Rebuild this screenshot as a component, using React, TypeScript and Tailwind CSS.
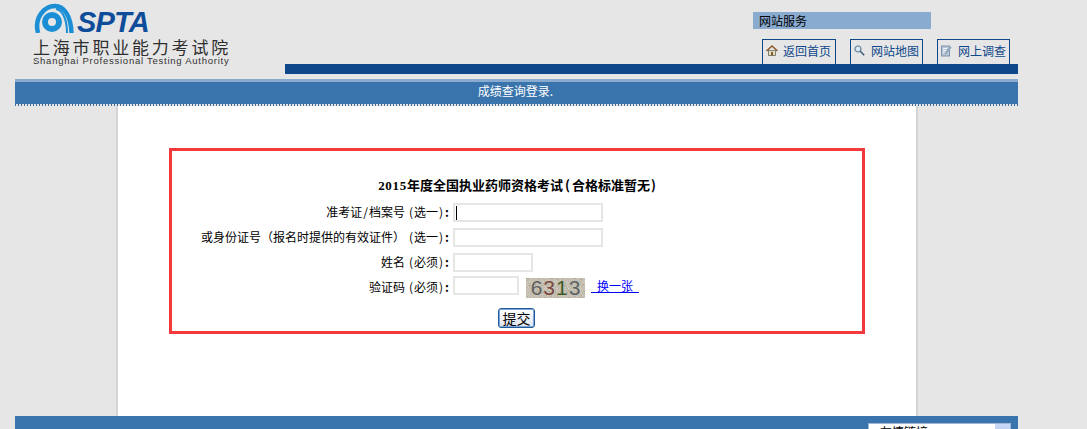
import React from 'react';

const cjk = "font-['Noto_Sans_CJK_SC',sans-serif]";

const HomeIcon = () => (
  <svg width="12" height="11" viewBox="0 0 12 11">
    <path d="M0.5 6 L6 1 L11.5 6" fill="none" stroke="#8a5a2a" strokeWidth="1.5" />
    <rect x="2.5" y="5.5" width="7" height="5" fill="#e8dcc0" stroke="#6b6b5a" strokeWidth="0.8" />
    <rect x="5" y="7" width="2" height="3.5" fill="#7a5a30" />
  </svg>
);

const SearchIcon = () => (
  <svg width="11" height="11" viewBox="0 0 11 11">
    <circle cx="4" cy="4" r="3" fill="#dbe6f0" stroke="#5f7f9f" strokeWidth="1.2" />
    <path d="M6.3 6.3 L10.2 10.2" stroke="#3f5f7f" strokeWidth="1.6" />
  </svg>
);

const EditIcon = () => (
  <svg width="11" height="12" viewBox="0 0 11 12">
    <rect x="0.5" y="1" width="8" height="10" fill="#b9c6d6" stroke="#7d93ad" />
    <path d="M2 3.5 H6 M2 5.5 H5 M2 7.5 H4" stroke="#f2f5f8" />
    <path d="M4 9 L10 2" stroke="#8fa4bc" strokeWidth="1.8" />
  </svg>
);

const Logo = () => (
  <div className="pl-[18px] w-[270px] shrink-0">
    <div className="flex h-[33px] items-end">
      <svg width="40" height="33" viewBox="0 0 40 33" className="ml-[1px] shrink-0">
        <g fill="none" stroke="#1b8fd6">
          <path d="M4 33 C0 18 10 6 21 6 C30 6 37 16 37.5 33" strokeWidth="4.5" />
          <path d="M22 9 C29 10 33 20 33 33" strokeWidth="2" />
          <circle cx="18" cy="22" r="7" strokeWidth="6" />
        </g>
      </svg>
      <span className="ml-[3px] font-['Liberation_Sans',sans-serif] italic font-bold text-[29px] leading-[21px] tracking-[-0.8px] text-[#0f4d9a]">SPTA</span>
    </div>
    <div className={`${cjk} mt-[4px] text-[17px] leading-[19px] tracking-[2.8px] text-[#2f2f2f] whitespace-nowrap`}>上海市职业能力考试院</div>
    <div className="font-['Liberation_Sans',sans-serif] text-[9.5px] leading-[9px] tracking-[0.75px] text-[#333] whitespace-nowrap">Shanghai Professional Testing Authority</div>
  </div>
);

const navItems = [
  { label: '返回首页', icon: <HomeIcon />, w: 'w-[74px]', gap: 'gap-[5px]' },
  { label: '网站地图', icon: <SearchIcon />, w: 'w-[73px]', gap: 'gap-[6px]' },
  { label: '网上调查', icon: <EditIcon />, w: 'w-[73px]', gap: 'gap-[6px]' },
];

const Header = () => (
  <div className="flex h-[79px]">
    <Logo />
    <div className="flex-1 flex flex-col pt-[12px]">
      <div className={`${cjk} ml-[468px] w-[178px] h-[17px] bg-[#89abd0] pl-[6px] text-[12px] leading-[17px] text-black`}>网站服务</div>
      <div className="ml-[477px] mt-[10px] flex gap-[14px] h-[25px]">
        {navItems.map((item) => (
          <div key={item.label} className={`${item.w} border border-b-0 border-[#0e478a] flex items-center pl-[3px] pb-[3px] ${item.gap} text-[12px] text-[#0e478a] ${cjk}`}>
            {item.icon}
            <span>{item.label}</span>
          </div>
        ))}
      </div>
      <div className="h-[10px] bg-[#0e478a]" />
    </div>
  </div>
);

const Label = ({ name, hint }: { name: React.ReactNode; hint: string }) => (
  <>
    {name}
    <span className="ml-[4px]">(</span>
    <span className="mx-[1px]">{hint}</span>)
    <span className="ml-[2px] mr-[4px] font-bold">:</span>
  </>
);

const rows = [
  { id: 'no', name: <>准考证<span className="mx-[1px]">/</span>档案号</>, hint: '选一', w: 'w-[150px]', caret: true },
  { id: 'card', name: '或身份证号（报名时提供的有效证件）', hint: '选一', w: 'w-[150px]', caret: false },
  { id: 'name', name: '姓名', hint: '必须', w: 'w-[80px]', caret: false },
];

const noise = Array.from({ length: 220 }, (_, i) => ({
  x: (i * 37) % 59,
  y: (i * 13 + (i % 7) * 5) % 20,
  c: i % 3 === 0 ? '#aaa596' : i % 3 === 1 ? '#d8d3c6' : '#b6b1a1',
}));

const Captcha = () => (
  <div className="relative w-[59px] h-[20px] bg-[#c5c0b1]">
    <svg width="59" height="20" className="block">
      {noise.map((n, i) => (
        <rect key={i} x={n.x} y={n.y} width="1" height="1" fill={n.c} />
      ))}
    </svg>
    <div className="absolute inset-0 flex items-center justify-center gap-[1px] font-['Liberation_Sans',sans-serif] text-[21px] leading-[20px]">
      <span className="text-[#5f6060]">6</span>
      <span className="text-[#7a4a42]">3</span>
      <span className="text-[#3f5a25]">1</span>
      <span className="text-[#5c6468]">3</span>
    </div>
  </div>
);

const inputClass = 'h-[19px] border-2 border-[#e6e6e6] bg-white flex items-center pl-[1px]';

const LoginForm = () => (
  <div className="mx-[51px] h-[186px] border-[3px] border-[#f23a3c] flex flex-col items-center">
    <div className={`${cjk} mt-[27px] h-[14px] text-[13px] leading-[14px] font-bold text-black whitespace-nowrap`}>
      <span className="font-['Liberation_Serif',serif] tracking-[0.7px]">2015</span>年度全国执业药师资格考试
      <span className="ml-[2px] mr-[2px]">(</span>合格标准暂无<span className="ml-[1px]">)</span>
    </div>
    <div className={`${cjk} mt-[11px] w-full grid grid-cols-[281px_1fr] text-[12px] text-black`}>
      {rows.map((row) => (
        <React.Fragment key={row.id}>
          <div className="h-[25px] leading-[17px] text-right whitespace-nowrap">
            <Label name={row.name} hint={row.hint} />
          </div>
          <div className="h-[25px]">
            <div className={`${inputClass} ${row.w}`}>
              {row.caret && <div className="w-[1px] h-[14px] bg-black" />}
            </div>
          </div>
        </React.Fragment>
      ))}
      <div className="h-[24px] -mt-[2px] leading-[21px] text-right whitespace-nowrap">
        <Label name="验证码" hint="必须" />
      </div>
      <div className="h-[24px] -mt-[2px] flex items-start">
        <div className={`${inputClass} w-[66px]`} />
        <div className="ml-[7px] mt-[2px]"><Captcha /></div>
        <a className="ml-[6px] mt-[2px] w-[48px] h-[15px] border-b border-[#0000ff] pl-[6px] text-[#0000ff] leading-[15px] whitespace-nowrap">换一张</a>
      </div>
    </div>
    <button className={`${cjk} -ml-[1px] mt-[8px] w-[37px] h-[20px] rounded-[3px] border border-[#1f5a9c] shadow-[inset_0_0_0_1px_#7fa6d6] bg-gradient-to-b from-white to-[#dfe6ee] text-[14px] leading-[14px] text-black`}>提交</button>
  </div>
);

export default function App() {
  return (
    <div className="h-[429px] overflow-hidden bg-[#e6e6e6]">
      <div className="ml-[15px] w-[1003px]">
        <Header />
        <div className="border-t-[3px] border-[#89abd0] h-[25px] bg-[#3a74ac] text-center">
          <span className={`${cjk} -ml-[2px] text-[12px] leading-[18px] text-white block`}>成绩查询登录.</span>
        </div>
        <div className="h-[2px] bg-[repeating-linear-gradient(90deg,#3a6a9a_0_1.5px,transparent_1.5px_3px)]" />
        <div className="ml-[101px] w-[802px] h-[310px] border-x-2 border-[#d4d4d4] bg-white pt-[42px]">
          <LoginForm />
        </div>
        <div className="h-[30px] bg-[#3a74ac] pt-[7px] pl-[853px]">
          <div className="w-[143px] h-[20px] bg-white border border-[#9db8d6] flex justify-between">
            <span className={`${cjk} ml-[11px] text-[12px] leading-[16px] text-black`}>友情链接</span>
            <span className="w-[15px] h-[16px] bg-gradient-to-b from-[#c9d8f5] to-[#b0c4ee] rounded-[1px]" />
          </div>
        </div>
      </div>
    </div>
  );
}
